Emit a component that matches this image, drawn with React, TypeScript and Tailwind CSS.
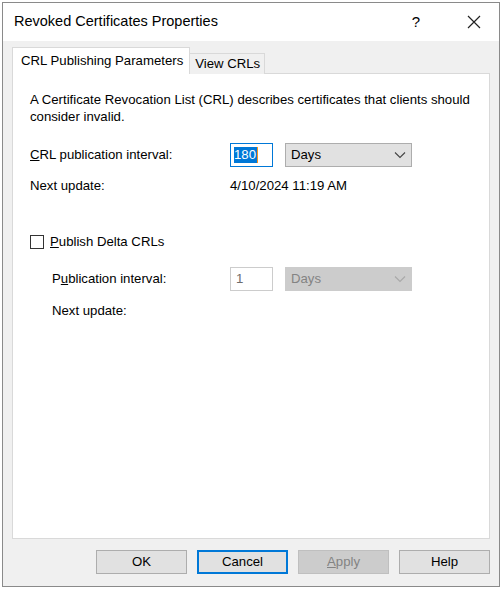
import React from 'react';

function Chevron({ disabled }: { disabled?: boolean }) {
  return (
    <svg width="12" height="8" viewBox="0 0 12 8" className="shrink-0">
      <path d="M1 1.5 L6 6.5 L11 1.5" fill="none" stroke={disabled ? '#a8a8a8' : '#444'} strokeWidth="1.1" />
    </svg>
  );
}

function Btn({ children, focused, disabled }: { children: React.ReactNode; focused?: boolean; disabled?: boolean }) {
  return (
    <div
      className={
        'w-[91px] h-[24px] flex items-center justify-center border ' +
        (focused
          ? 'border-[#0078d7] border-2 bg-[#e1e1e1] text-black'
          : disabled
          ? 'border-[#bfbfbf] bg-[#cccccc] text-[#838383]'
          : 'border-[#adadad] bg-[#e1e1e1] text-black')
      }
    >
      {children}
    </div>
  );
}

export default function App() {
  return (
    <div className="w-[502px] h-[591px] bg-white p-[2px] text-[13.2px] text-black" style={{ fontFamily: '"Segoe UI", "Liberation Sans", Arial, sans-serif' }}>
      <div className="h-[585px] border border-[#8a8a8a] flex flex-col bg-[#f0f0f0]">
        {/* title bar */}
        <div className="h-[38px] bg-white flex items-center pl-[11px] pr-[18px] shrink-0">
          <span className="text-[14.5px] flex-1">Revoked Certificates Properties</span>
          <span className="text-[15px] mr-[47px]">?</span>
          <svg width="14" height="14" viewBox="0 0 14 14">
            <path d="M1 1 L13 13 M13 1 L1 13" stroke="#222" strokeWidth="1.2" />
          </svg>
        </div>
        {/* tabs */}
        <div className="px-[9px] pt-[6px] flex flex-col flex-1">
          <div className="flex items-end h-[27px] relative z-10">
            <div className="h-[27px] bg-white border border-[#d9d9d9] border-b-0 pl-[8px] pr-[6px] flex items-center">CRL Publishing Parameters</div>
            <div className="h-[21px] bg-[#f0f0f0] border border-[#d9d9d9] border-l-0 border-b-0 pl-[5px] pr-[4px] flex items-center">View CRLs</div>
          </div>
          <div className="h-[466px] bg-white border border-[#d9d9d9] -mt-px px-[17px] pt-[17px]">
            <p className="leading-[17px]">
              A Certificate Revocation List (CRL) describes certificates that clients should consider invalid.
            </p>
            <div className="flex items-center mt-[18px]">
              <span className="w-[200px]"><span className="underline">C</span>RL publication interval:</span>
              <div className="w-[43px] h-[24px] border border-[#0078d7] flex items-center pl-[3px]">
                <span className="bg-[#0078d7] text-white leading-[16px] border-r border-[#f7931e] pr-px">180</span>
              </div>
              <div className="ml-[12px] w-[127px] h-[24px] border border-[#adadad] bg-[#e1e1e1] flex items-center justify-between pl-[5px] pr-[5px]">
                <span>Days</span>
                <Chevron />
              </div>
            </div>
            <div className="flex items-center mt-[10px] leading-[17px]">
              <span className="w-[200px]">Next update:</span>
              <span>4/10/2024 11:19 AM</span>
            </div>
            <div className="flex items-center mt-[39px] leading-[17px]">
              <div className="w-[14px] h-[14px] border border-[#333] bg-white mr-[6px]" />
              <span><span className="underline">P</span>ublish Delta CRLs</span>
            </div>
            <div className="pl-[22px]">
              <div className="flex items-center mt-[17px]">
                <span className="w-[178px]">P<span className="underline">u</span>blication interval:</span>
                <div className="w-[43px] h-[24px] border border-[#cccccc] flex items-center pl-[5px] text-[#6d6d6d]">1</div>
                <div className="ml-[12px] w-[127px] h-[24px] border border-[#cccccc] bg-[#cccccc] flex items-center justify-between pl-[5px] pr-[5px] text-[#838383]">
                  <span>Days</span>
                  <Chevron disabled />
                </div>
              </div>
              <div className="mt-[11px] leading-[17px]">Next update:</div>
            </div>
          </div>
          <div className="flex justify-end gap-[10px] mt-[11px] pr-0">
            <Btn>OK</Btn>
            <Btn focused>Cancel</Btn>
            <Btn disabled><span className="underline">A</span>pply</Btn>
            <Btn>Help</Btn>
          </div>
        </div>
      </div>
    </div>
  );
}
